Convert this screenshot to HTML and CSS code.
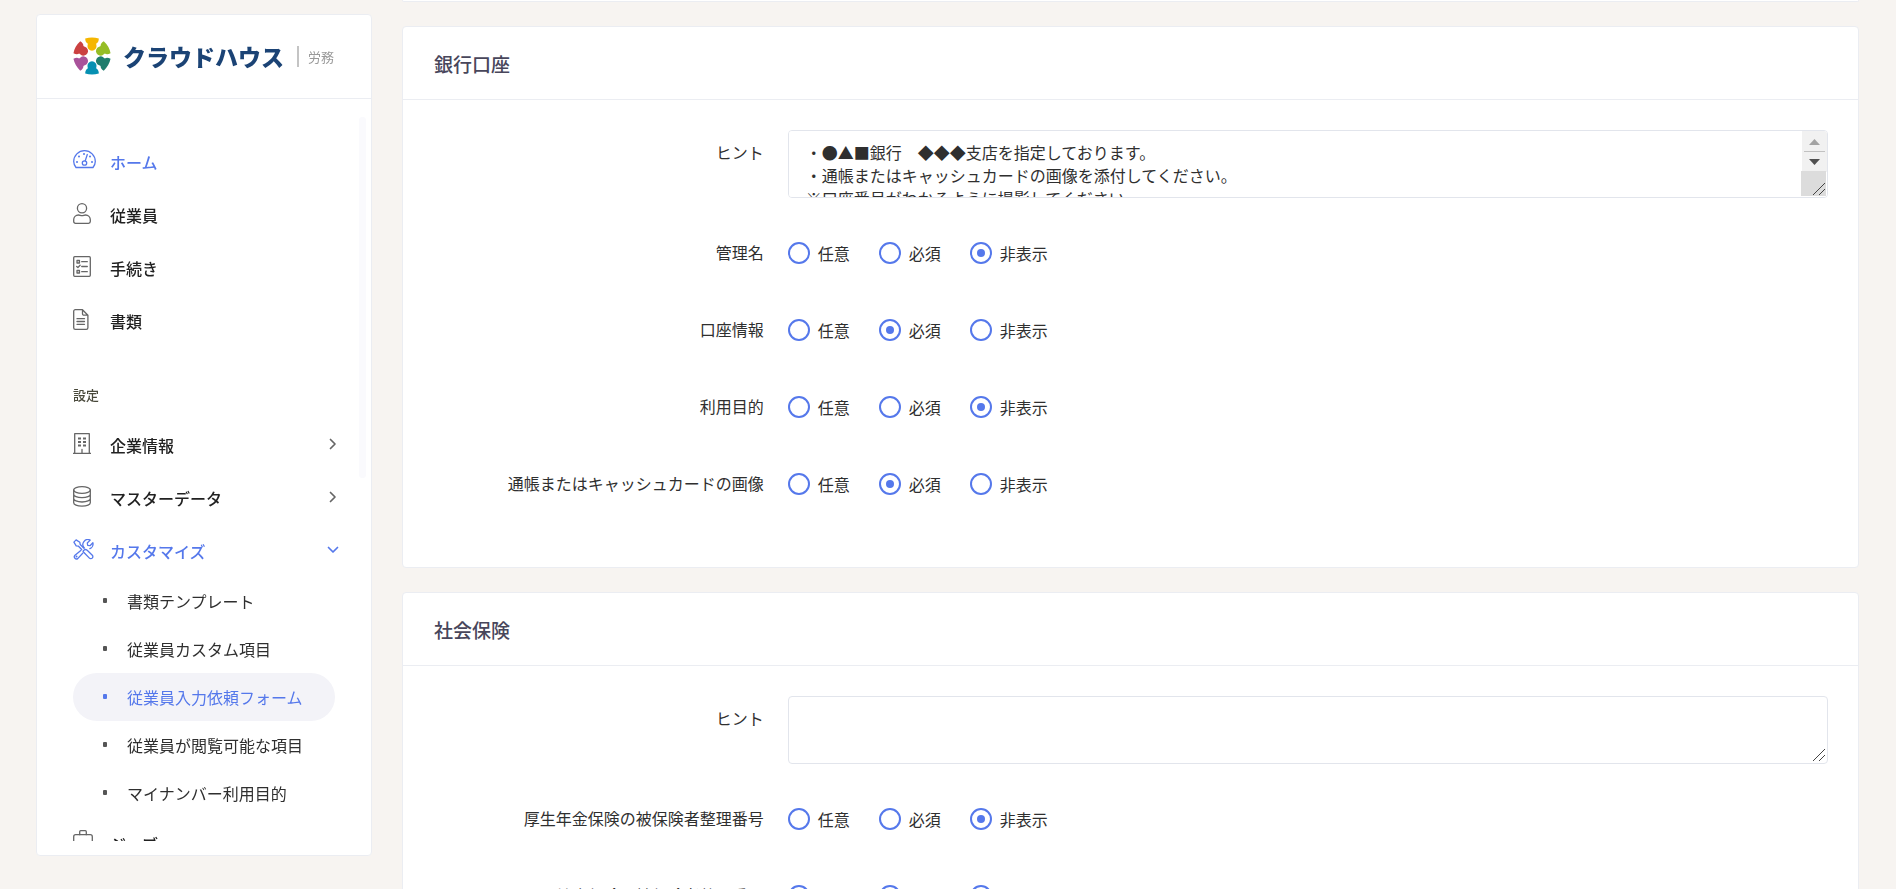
FILE: index.html
```html
<!DOCTYPE html>
<html lang="ja">
<head>
<meta charset="utf-8">
<title>従業員入力依頼フォーム</title>
<link rel="stylesheet" href="styles.css">
</head>
<body>
<aside class="sidebar">
  <a class="brand" href="#">
    <svg class="brand-mark" viewBox="0 0 38 38" aria-hidden="true">
      <defs><path id="petal" d="M12.200 1.500Q19-.7 25.800 1.500Q25.800 5.400 23.300 6.600Q23.200 7.500 23.400 8.300A4.500 4.500 0 1 1 14.600 8.300Q14.800 7.500 14.700 6.600Q12.200 5.400 12.200 1.500Z"/></defs>
      <use href="#petal" fill="#f5b600"/>
      <use href="#petal" fill="#95bd25" transform="rotate(60 19 19)"/>
      <use href="#petal" fill="#1f7d6d" transform="rotate(120 19 19)"/>
      <use href="#petal" fill="#0690b2" transform="rotate(180 19 19)"/>
      <use href="#petal" fill="#a9529a" transform="rotate(240 19 19)"/>
      <use href="#petal" fill="#cb4141" transform="rotate(300 19 19)"/>
    </svg>
    <span class="brand-name">クラウドハウス</span>
    <span class="brand-product">労務</span>
  </a>
  <nav class="nav">
    <a class="nav-item is-active" href="#">
      <span class="nav-icon"><svg width="23" height="20" viewBox="0 0 23 20"><path d="M3 17.500C1.500 15.500.7 13.500.7 11.500a10.800 10.800 0 0 1 21.600 0c0 2-.8 4-2.300 6z"/><circle cx="11.500" cy="13" r="2.200"/><path d="M12.200 10.900 14.300 4.500"/><path class="dots" d="M4 12h.01M6 6.500h.01M11 4h.01M17 6.500h.01M19 12h.01"/></svg></span>
      <span class="nav-text">ホーム</span>
    </a>
    <a class="nav-item" href="#">
      <span class="nav-icon"><svg width="18" height="21" viewBox="0 0 18 21"><circle cx="9" cy="5.300" r="4.600"/><path d="M5.500 12c1.500 0 1.900.7 3.500.7s2-.7 3.500-.7c2.800 0 4.800 2.200 4.800 4.800v1.700c0 1-.8 1.800-1.800 1.800h-13c-1 0-1.800-.8-1.800-1.800v-1.700C.7 14.200 2.700 12 5.500 12z"/></svg></span>
      <span class="nav-text">従業員</span>
    </a>
    <a class="nav-item" href="#">
      <span class="nav-icon"><svg width="18" height="21" viewBox="0 0 18 21"><rect x=".7" y=".7" width="16.600" height="19.600" rx="1"/><path d="M4 4.500h2.500v2.500H4zM4 14.500h2.500v2.500H4zM3.700 10.500l1.200 1 2.200-2.300M8.700 5.700h5.600M8.700 10.500h5.600M8.700 15.700h5.600"/></svg></span>
      <span class="nav-text">手続き</span>
    </a>
    <a class="nav-item" href="#">
      <span class="nav-icon"><svg width="16" height="21" viewBox="0 0 16 21"><path d="M9.500.7H2.300C1.400.7.7 1.400.7 2.300v16.400c0 .9.7 1.600 1.600 1.600h11c.9 0 1.600-.7 1.600-1.600V6.200zM9.500.7v4c0 .9.600 1.500 1.500 1.500h3.900M4 9.700h7.500M4 12.500h7.500M4 15.300h7.500"/></svg></span>
      <span class="nav-text">書類</span>
    </a>
    <h2 class="nav-section">設定</h2>
    <a class="nav-item" href="#">
      <span class="nav-icon"><svg width="18" height="21" viewBox="0 0 18 21"><path d="M0 20.300h18M1.700 20.300V.7h14.600v19.600M9 16.500v3.800"/><path class="windows" d="M5 5.500h3M10 5.500h3M5 9h3M10 9h3M5 12.500h3M10 12.500h3"/></svg></span>
      <span class="nav-text">企業情報</span>
      <svg class="chevron" width="12" height="12" viewBox="0 0 12 12"><path d="M3.500 1.500 8 6l-4.500 4.500"/></svg>
    </a>
    <a class="nav-item" href="#">
      <span class="nav-icon"><svg width="18" height="21" viewBox="0 0 18 21"><ellipse cx="9" cy="4" rx="8.300" ry="3.300"/><path d="M.7 4v12.700C.7 18.500 4 20.200 9 20.200s8.300-1.700 8.300-3.500V4M.7 8.200C.7 10 4 11.700 9 11.700s8.300-1.700 8.300-3.500M.7 12.500C.7 14.300 4 16 9 16s8.300-1.700 8.300-3.500"/></svg></span>
      <span class="nav-text">マスターデータ</span>
      <svg class="chevron" width="12" height="12" viewBox="0 0 12 12"><path d="M3.500 1.500 8 6l-4.500 4.500"/></svg>
    </a>
    <a class="nav-item is-active" href="#">
      <span class="nav-icon"><svg width="21" height="21" viewBox="0 0 21 21"><path d="M3.100.9.900 3.100 3.200 6.800l2.300.4 3.200 3.300M3.100.9l3.700 2.300.4 2.300 3.500 3.500M10.700 13.200l5.700 5.900a2 2 0 0 0 2.900-2.800l-5.100-5.100c-1.200-.9-2.300-.9-3-.2l-.6.500c-.7.700-.7 1 .1 1.700z"/><path d="M7.800 11.400 1.700 16.500a2.200 2.200 0 0 0 3 3.100l5-5.300M11.300 9a5 5 0 0 1 5.900-7.900l-2.900 2.900.4 2.300 2.300.4 2.900-2.900c.6 2.300-.8 5-3 5.900"/><path class="dots" d="M3.500 17.600h.01"/></svg></span>
      <span class="nav-text">カスタマイズ</span>
      <svg class="chevron" width="12" height="12" viewBox="0 0 12 12"><path d="M1.500 3.500 6 8l4.500-4.500"/></svg>
    </a>
    <ul class="subnav">
      <li><a class="subnav-item" href="#">書類テンプレート</a></li>
      <li><a class="subnav-item" href="#">従業員カスタム項目</a></li>
      <li><a class="subnav-item is-current" href="#" aria-current="page">従業員入力依頼フォーム</a></li>
      <li><a class="subnav-item" href="#">従業員が閲覧可能な項目</a></li>
      <li><a class="subnav-item" href="#">マイナンバー利用目的</a></li>
    </ul>
    <a class="nav-item" href="#">
      <span class="nav-icon"><svg width="20" height="24" viewBox="0 0 20 24"><rect x=".7" y="4.700" width="18.600" height="16" rx="2"/><path d="M6.700 4.700v-3c0-.6.400-1 1-1h4.600c.6 0 1 .4 1 1v3M.7 12h18.600"/></svg></span>
      <span class="nav-text">ジョブ</span>
    </a>
  </nav>
  <span class="nav-thumb" aria-hidden="true"></span>
</aside>

<main class="content">
  <div class="card card-tail"></div>

  <section class="card">
    <h3 class="card-title">銀行口座</h3>
    <div class="card-body">
      <div class="row row-hint">
        <label class="row-label" for="bank-hint">ヒント</label>
        <div class="row-control">
          <div class="hint-box">
            <textarea id="bank-hint" class="hint">・●▲■銀行　◆◆◆支店を指定しております。
・通帳またはキャッシュカードの画像を添付してください。
※口座番号がわかるように撮影してください。</textarea>
            <svg class="hint-scroll" width="26" height="66" viewBox="0 0 26 66" aria-hidden="true">
              <path fill="#f1f1f1" d="M1 0h22q3 0 3 3v38H1z"/>
              <path fill="#a3a3a3" d="M8 14h11l-5.500-6z"/>
              <path fill="#c1c1c1" d="M3 20h21v1H3z"/>
              <path fill="#505050" d="M8 28h11l-5.500 6z"/>
              <path fill="#dcdcdc" d="M0 40h25v25H0z"/>
              <path fill="none" stroke="#444" d="M12 64 24 52M18 64l6-6"/>
            </svg>
          </div>
        </div>
      </div>
      <div class="row" role="radiogroup" aria-labelledby="l1">
        <span class="row-label" id="l1">管理名</span>
        <div class="row-control options">
          <label class="option"><input type="radio" name="r1">任意</label>
          <label class="option"><input type="radio" name="r1">必須</label>
          <label class="option"><input type="radio" name="r1" checked>非表示</label>
        </div>
      </div>
      <div class="row" role="radiogroup" aria-labelledby="l2">
        <span class="row-label" id="l2">口座情報</span>
        <div class="row-control options">
          <label class="option"><input type="radio" name="r2">任意</label>
          <label class="option"><input type="radio" name="r2" checked>必須</label>
          <label class="option"><input type="radio" name="r2">非表示</label>
        </div>
      </div>
      <div class="row" role="radiogroup" aria-labelledby="l3">
        <span class="row-label" id="l3">利用目的</span>
        <div class="row-control options">
          <label class="option"><input type="radio" name="r3">任意</label>
          <label class="option"><input type="radio" name="r3">必須</label>
          <label class="option"><input type="radio" name="r3" checked>非表示</label>
        </div>
      </div>
      <div class="row" role="radiogroup" aria-labelledby="l4">
        <span class="row-label" id="l4">通帳またはキャッシュカードの画像</span>
        <div class="row-control options">
          <label class="option"><input type="radio" name="r4">任意</label>
          <label class="option"><input type="radio" name="r4" checked>必須</label>
          <label class="option"><input type="radio" name="r4">非表示</label>
        </div>
      </div>
    </div>
  </section>

  <section class="card">
    <h3 class="card-title">社会保険</h3>
    <div class="card-body">
      <div class="row row-hint">
        <label class="row-label" for="insurance-hint">ヒント</label>
        <div class="row-control">
          <div class="hint-box">
            <textarea id="insurance-hint" class="hint"></textarea>
            <svg class="hint-scroll" width="26" height="66" viewBox="0 0 26 66" aria-hidden="true">
              <path fill="none" stroke="#444" d="M12 64 24 52M18 64l6-6"/>
            </svg>
          </div>
        </div>
      </div>
      <div class="row" role="radiogroup" aria-labelledby="l5">
        <span class="row-label" id="l5">厚生年金保険の被保険者整理番号</span>
        <div class="row-control options">
          <label class="option"><input type="radio" name="r5">任意</label>
          <label class="option"><input type="radio" name="r5">必須</label>
          <label class="option"><input type="radio" name="r5" checked>非表示</label>
        </div>
      </div>
      <div class="row" role="radiogroup" aria-labelledby="l6">
        <span class="row-label" id="l6">健康保険の被保険者整理番号</span>
        <div class="row-control options">
          <label class="option"><input type="radio" name="r6">任意</label>
          <label class="option"><input type="radio" name="r6">必須</label>
          <label class="option"><input type="radio" name="r6" checked>非表示</label>
        </div>
      </div>
    </div>
  </section>
</main>
</body>
</html>
```
FILE: styles.css
```css
:root {
  --blue: #5578eb;
  --line: #ebedf2;
  --ink: #2f2f2f;
}

*, *::before, *::after { box-sizing: border-box; }

html { scrollbar-width: none; }

body {
  margin: 0;
  background: #f7f4f1;
  color: var(--ink);
  font: 16px/24px "Noto Sans CJK JP", sans-serif;
}

a { color: inherit; text-decoration: none; }

/* Sidebar */
.sidebar {
  position: fixed;
  top: 14px;
  bottom: 33px;
  left: 36px;
  width: 336px;
  display: flex;
  flex-direction: column;
  padding-bottom: 14px;
  background: #fff;
  border: 1px solid var(--line);
  border-radius: 4px;
}

.brand {
  display: flex;
  align-items: center;
  flex: none;
  height: 84px;
  padding: 0 36px 1px;
  border-bottom: 1px solid var(--line);
}

.brand-mark { width: 38px; height: 38px; flex: none; }

.brand-name {
  margin-left: 12px;
  color: #1b4375;
  font-size: 23px;
  font-weight: 900;
  white-space: nowrap;
}

.brand-product {
  margin-left: 13px;
  padding-left: 9px;
  border-left: 2px solid #c4c4c4;
  color: #999;
  font-size: 13px;
  line-height: 21px;
  white-space: nowrap;
}

.nav {
  flex: 1;
  min-height: 0;
  overflow: hidden;
  padding: 36px 36px 0;
}

.nav-thumb {
  position: absolute;
  top: 102px;
  right: 5px;
  width: 7px;
  height: 361px;
  border-radius: 3px;
  background: #fafafd;
}

.nav-item {
  display: flex;
  align-items: center;
  height: 53px;
  color: #212121;
  font-weight: 500;
}

.nav-icon { display: flex; width: 37px; flex: none; padding-bottom: 3px; }

.nav-text { flex: 1; }

.nav-icon svg, .chevron {
  fill: none;
  stroke: #666;
  stroke-width: 1.3;
  stroke-linecap: round;
  stroke-linejoin: round;
}

.nav-icon .dots { stroke-width: 2; }
.nav-icon .windows { stroke-width: 2; stroke-linecap: butt; }

.nav-item .chevron { stroke-width: 1.7; margin: 0 -4px 2px 0; }

.nav-item.is-active { color: var(--blue); }
.nav-item.is-active svg { stroke: var(--blue); }

.nav-section {
  margin: 0;
  padding: 36px 0 11px;
  color: #48483a;
  font-size: 13px;
  font-weight: 500;
}

.subnav { margin: 0; padding: 0; list-style: none; }

.subnav-item {
  display: flex;
  align-items: center;
  height: 48px;
  padding-left: 30px;
  border-radius: 24px;
  white-space: nowrap;
}

.subnav-item::before {
  content: "";
  width: 4px;
  height: 5px;
  margin: 0 20px 2px 0;
  border-radius: 1px;
  background: #555;
}

.subnav-item.is-current { background: #f3f3f8; color: var(--blue); }
.subnav-item.is-current::before { background: var(--blue); }

/* Content */
.content {
  display: flex;
  flex-direction: column;
  gap: 24px;
  padding: 0 37px 24px 402px;
}

.card {
  background: #fff;
  border: 1px solid var(--line);
  border-radius: 4px;
}

.card-tail { height: 2px; border-top: 0; border-radius: 0 0 4px 4px; }

.card-title {
  margin: 0;
  padding: 25px 31px 23px;
  border-bottom: 1px solid var(--line);
  color: #48465b;
  font-size: 19px;
  font-weight: 500;
}

.card-body {
  display: flex;
  flex-direction: column;
  gap: 29px;
  padding: 30px 30px 59px;
}

.row { display: flex; align-items: center; min-height: 48px; margin: 0 -12px; }

.row-label { width: 25%; padding: 0 12px 2px; text-align: right; flex: none; }

.row-control { flex: 1; padding: 0 12px; }

.row-hint { align-items: flex-start; margin-bottom: 2px; }
.row-hint .row-label { padding-top: 10px; }

.hint-box { position: relative; }

.hint {
  display: block;
  width: 100%;
  height: 68px;
  padding: 10px 17px;
  border: 1px solid #e2e5ec;
  border-radius: 4px;
  background: #fff;
  color: var(--ink);
  font: inherit;
  line-height: 23px;
  resize: vertical;
}

.hint::-webkit-resizer { background: transparent; }

.hint-scroll {
  position: absolute;
  right: 1px;
  bottom: 1px;
  pointer-events: none;
}

.options { display: flex; gap: 29px; }

.option { display: flex; align-items: center; gap: 8px; }

.option input {
  appearance: none;
  display: grid;
  place-items: center;
  width: 22px;
  height: 22px;
  margin: 0;
  border: 2px solid var(--blue);
  border-radius: 50%;
  background: #fff;
}

.option input:checked::before {
  content: "";
  width: 8px;
  height: 8px;
  border-radius: 50%;
  background: var(--blue);
}
```
